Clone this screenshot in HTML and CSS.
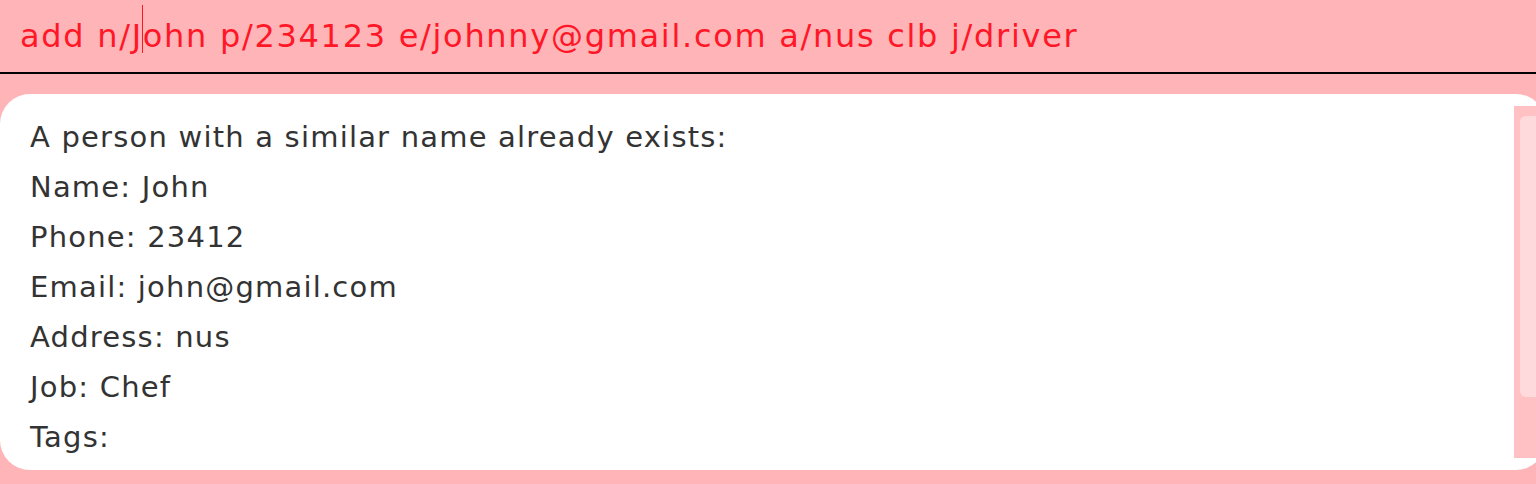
FILE: index.html
```html
<!DOCTYPE html>
<html>
<head>
<meta charset="utf-8">
<link rel="stylesheet" href="styles.css">
</head>
<body>
<div class="command">add n/J<span class="caret"></span>ohn p/234123 e/johnny@gmail.com a/nus clb j/driver</div>
<div class="result">
  <div class="result-text">
    <div class="line">A person with a similar name already exists:</div>
    <div class="line">Name: John</div>
    <div class="line">Phone: 23412</div>
    <div class="line">Email: john@gmail.com</div>
    <div class="line">Address: nus</div>
    <div class="line">Job: Chef</div>
    <div class="line">Tags:</div>
  </div>
  <div class="scroll-track"><div class="scroll-thumb"></div></div>
</div>
</body>
</html>
```
FILE: styles.css
```css
html, body {
  margin: 0;
  padding: 0;
  height: 484px;
  overflow: hidden;
  background: #ffb5b8;
  font-family: "DejaVu Sans", "Noto Sans", sans-serif;
}
.command {
  height: 74px;
  box-sizing: border-box;
  border-bottom: 2px solid #000;
  padding-left: 20px;
  font-size: 32px;
  letter-spacing: 1.7px;
  line-height: 72px;
  color: #ff1727;
  white-space: nowrap;
}
.caret {
  position: relative;
  display: inline-block;
  width: 0;
  height: 0;
}
.caret::after {
  content: "";
  position: absolute;
  left: -1px;
  top: -42px;
  width: 1px;
  height: 48px;
  background: #ff1727;
}
.result {
  margin-top: 20px;
  margin-right: -10px;
  height: 376px;
  background: #fff;
  border-radius: 30px;
  display: flex;
}
.result-text {
  flex: 1;
  padding: 18px 0 0 30px;
  color: #333;
  font-size: 29px;
  letter-spacing: 1.2px;
  line-height: 50px;
}
.scroll-track {
  width: 32px;
  margin: 12px 0;
  background: #ffc1c4;
  padding: 10px 0 0 6px;
  box-sizing: border-box;
}
.scroll-thumb {
  height: 281px;
  background: #ffdadc;
  border-radius: 6px;
}
```
